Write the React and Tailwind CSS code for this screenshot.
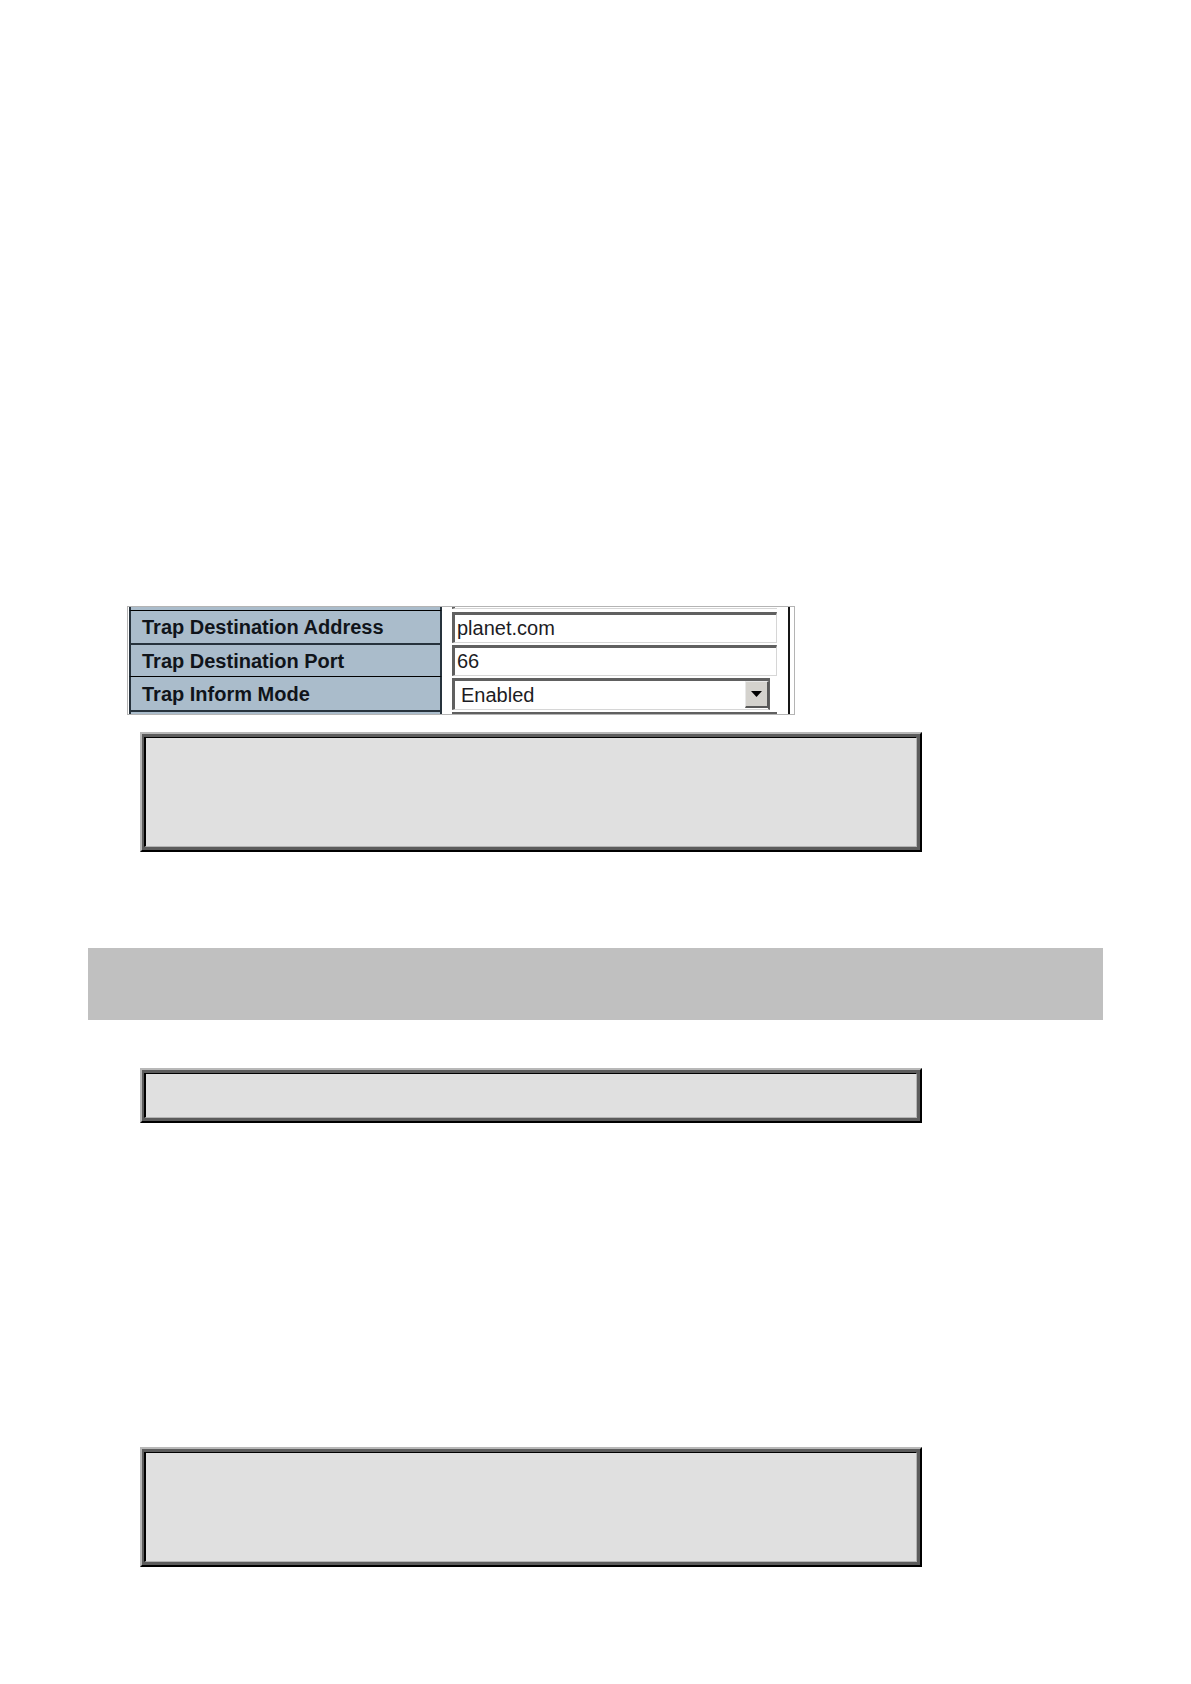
import clsx from "clsx";

const NoteBox = ({ className }) => (
  <div
    className={clsx(
      "flex w-full max-w-[782px] border-2 border-t-[#b8b8b8] border-l-[#b8b8b8] border-r-black border-b-black",
      className
    )}
  >
    <div className="flex flex-1 border-[#5c5c5c] border-t-3 border-r-3 border-b-3 border-l-2">
      <div className="flex-1 border-t border-r border-b border-l-2 border-t-black border-l-black border-r-[#b4b4b4] border-b-[#b4b4b4] bg-[#e0e0e0]" />
    </div>
  </div>
);

const labelCell =
  "w-[313px] border-x-2 border-[#26323c] bg-[#aabccb] p-0 pl-[11px] text-left align-middle";

const inputStyle =
  "block h-[31px] w-[325px] border-t-3 border-l-3 border-r border-b border-t-[#606060] border-l-[#606060] border-r-[#d6d6d6] border-b-[#d6d6d6] bg-white px-[2px] text-[20px] leading-6 text-[#1c1c24] outline-none";

const TextRow = ({ id, label, value, className }) => (
  <tr className="h-[33px]">
    <th className={clsx(labelCell, className)}>
      <label htmlFor={id} className="block leading-6">
        {label}
      </label>
    </th>
    <td className="p-0 pl-[10px] align-bottom">
      <input id={id} type="text" defaultValue={value} className={inputStyle} />
    </td>
  </tr>
);

const TrapSettings = () => (
  <div className="ml-[39px] flex w-full max-w-[668px] overflow-hidden border border-[#b4b4b4] bg-white pr-1 pl-px">
    <table className="w-full border-separate border-spacing-0 border-r-2 border-[#161616] text-[20px] text-[#10141a]">
      <tbody>
        {/* Tail of the row above */}
        <tr className="h-[3px]">
          <td className={labelCell} />
          <td className="p-0 pl-[10px] align-top">
            <div className="h-[2px] w-[325px] border-b border-l-3 border-b-[#d6d6d6] border-l-[#606060]" />
          </td>
        </tr>
        <TextRow
          id="trap-address"
          label="Trap Destination Address"
          value="planet.com"
          className="border-t border-t-black"
        />
        <TextRow
          id="trap-port"
          label="Trap Destination Port"
          value="66"
          className="border-t-2"
        />
        <tr className="h-[34px]">
          <th className={clsx(labelCell, "border-t border-t-black")}>
            <label htmlFor="trap-inform" className="block leading-6">
              Trap Inform Mode
            </label>
          </th>
          <td className="p-0 pl-[10px] align-bottom">
            <div className="relative w-[318px]">
              <select
                id="trap-inform"
                defaultValue="Enabled"
                className="block h-8 w-full appearance-none border-t-3 border-r-2 border-b border-l-3 border-t-[#606060] border-r-[#606060] border-b-[#d6d6d6] border-l-[#606060] bg-white pl-[6px] text-[20px] leading-6 text-[#1c1c24] outline-none"
              >
                <option>Enabled</option>
                <option>Disabled</option>
              </select>
              <span className="pointer-events-none absolute top-[3px] right-[1px] flex h-[27px] w-6 items-center justify-center border-t border-r-2 border-b-2 border-l border-t-[#e8e8e8] border-l-[#e8e8e8] border-r-[#585858] border-b-[#585858] bg-[#d4d2cd]">
                <svg width="11" height="6" viewBox="0 0 11 6" aria-hidden="true">
                  <path d="M0 0h11L5.5 6z" fill="#000" />
                </svg>
              </span>
            </div>
          </td>
        </tr>
        {/* Head of the row below */}
        <tr className="h-1">
          <td className={clsx(labelCell, "border-t-2")} />
          <td className="p-0 pl-[10px] align-bottom">
            <div className="h-[2px] w-[325px] bg-[#606060]" />
          </td>
        </tr>
      </tbody>
    </table>
  </div>
);

const App = () => {
  return (
    <main className="min-h-screen bg-white px-[88px] pt-[606px] pb-[117px] font-['Liberation_Sans',Arial,sans-serif]">
      <TrapSettings />
      <NoteBox className="mt-[17px] ml-[52px] h-[120px]" />

      {/* Section band */}
      <div className="mt-24 h-[72px] bg-[#c0c0c0]" />

      <NoteBox className="mt-12 ml-[52px] h-[55px]" />
      <NoteBox className="mt-[324px] ml-[52px] h-[120px]" />
    </main>
  );
};

export default App;
